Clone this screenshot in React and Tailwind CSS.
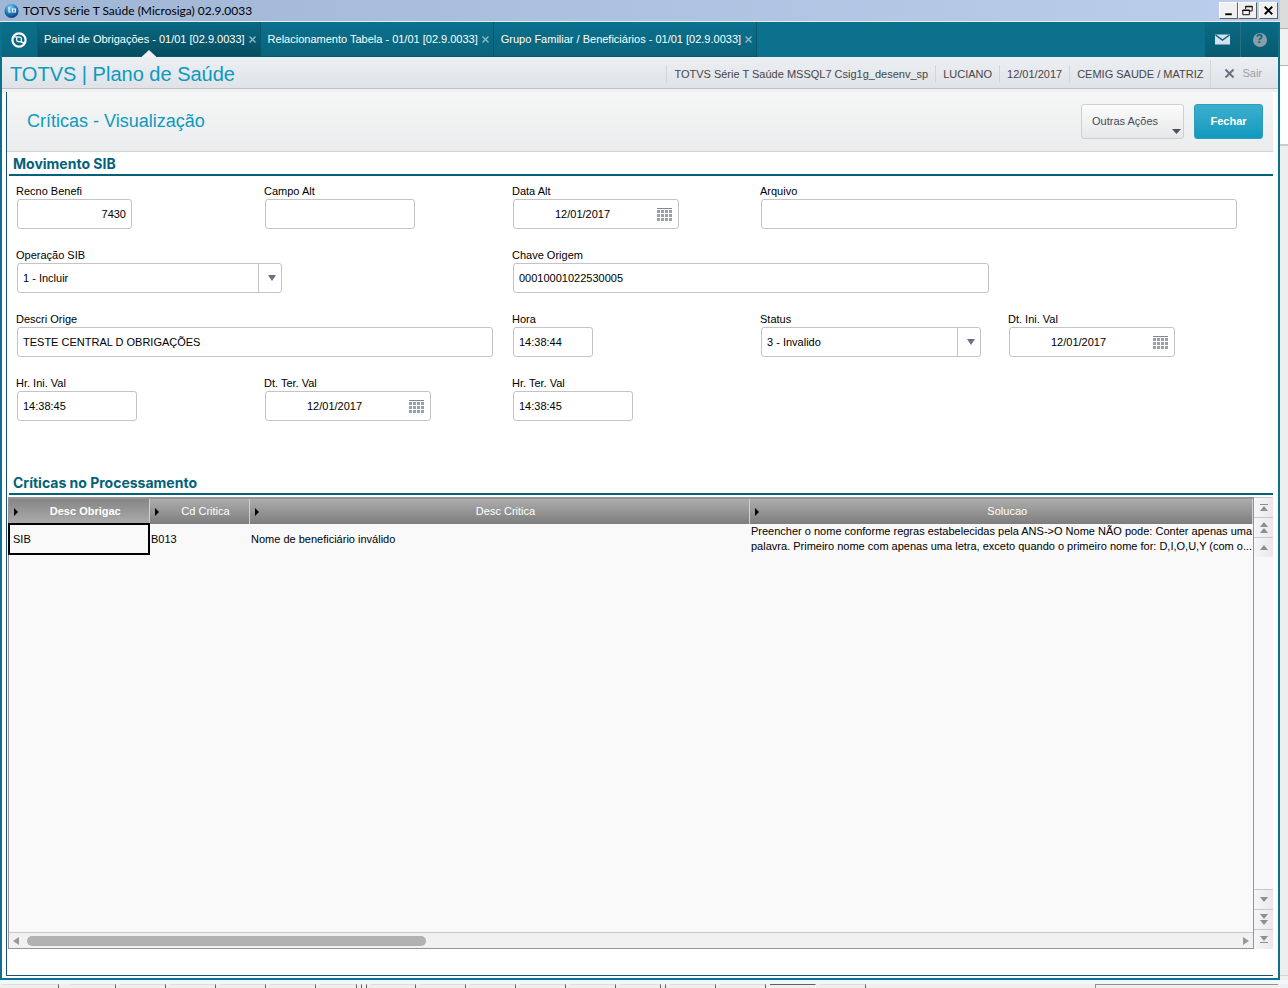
import { Fragment } from "react";

const tabs = [
  { title: "Painel de Obrigações - 01/01 [02.9.0033]", active: true },
  { title: "Relacionamento Tabela - 01/01 [02.9.0033]" },
  { title: "Grupo Familiar / Beneficiários - 01/01 [02.9.0033]" },
];

const sessionInfo = [
  "TOTVS Série T Saúde MSSQL7 Csig1g_desenv_sp",
  "LUCIANO",
  "12/01/2017",
  "CEMIG SAUDE / MATRIZ",
];

const fields = [
  { id: "recno", label: "Recno Benefi", value: "7430", width: "w-[115px]", align: "text-right" },
  { id: "campo", label: "Campo Alt", value: "", width: "w-[150px]" },
  { id: "dataAlt", label: "Data Alt", value: "12/01/2017", type: "date" },
  { id: "arquivo", label: "Arquivo", value: "", width: "w-[476px]", span: "col-span-2" },
  { id: "operacao", label: "Operação SIB", value: "1 - Incluir", type: "select", width: "w-[265px]", span: "col-span-2" },
  { id: "chave", label: "Chave Origem", value: "00010001022530005", width: "w-[476px]", span: "col-span-3" },
  { id: "descri", label: "Descri Orige", value: "TESTE CENTRAL D OBRIGAÇÕES", width: "w-[476px]", span: "col-span-2" },
  { id: "hora", label: "Hora", value: "14:38:44", width: "w-[80px]" },
  { id: "status", label: "Status", value: "3 - Invalido", type: "select", width: "w-[220px]" },
  { id: "dtIni", label: "Dt. Ini. Val", value: "12/01/2017", type: "date" },
  { id: "hrIni", label: "Hr. Ini. Val", value: "14:38:45", width: "w-[120px]" },
  { id: "dtTer", label: "Dt. Ter. Val", value: "12/01/2017", type: "date" },
  { id: "hrTer", label: "Hr. Ter. Val", value: "14:38:45", width: "w-[120px]" },
];

const columns = ["Desc Obrigac", "Cd Critica", "Desc Critica", "Solucao"];

const rows = [
  [
    "SIB",
    "B013",
    "Nome de beneficiário inválido",
    "Preencher o nome conforme regras estabelecidas pela ANS->O Nome NÃO pode: Conter apenas uma\npalavra. Primeiro nome com apenas uma letra, exceto quando o primeiro nome for: D,I,O,U,Y (com o...",
  ],
];

const toolbarWidths = [
  "w-[46px]", "w-[46px]", "w-[46px]", "w-[46px]", "w-[46px]", "w-[37px]", "w-px", "w-px", "w-[45px]",
  "w-[46px]", "w-[46px]", "w-[46px]", "w-[46px]", "w-[41px]", "w-px", "w-[46px]", "w-[46px]", "w-[46px]", "w-[46px]",
];

export default function App() {
  return (
    <div className="flex min-h-screen flex-col bg-[#f0f0f0] font-['Liberation_Sans',Arial,sans-serif] text-[11px] leading-[15px] text-black">
      <div className="flex flex-1">
        <div className="flex min-w-0 flex-1 flex-col">
          <TitleBar />
          <div className="flex flex-1 flex-col border-x-2 border-b-2 border-[#0b718d] bg-white">
            <TabBar />
            <SessionBar />
            <Content />
          </div>
        </div>
        <BackgroundEdge />
      </div>
      <BackgroundToolbar />
    </div>
  );
}

function TitleBar() {
  return (
    <header className="flex h-[22px] items-center border-b border-[#e4edf5] bg-linear-to-r from-[#9fb6d4] to-[#bbcfec] pr-0.5 pl-1">
      <svg className="h-4 w-4" viewBox="0 0 16 16">
        <defs>
          <radialGradient id="orb" cx="0.4" cy="0.25" r="0.8">
            <stop offset="0" stopColor="#8fd0f2" />
            <stop offset="0.5" stopColor="#1f7fc4" />
            <stop offset="1" stopColor="#123a6b" />
          </radialGradient>
        </defs>
        <circle cx="7.5" cy="8" r="7" fill="url(#orb)" />
        <path d="M5 4v5h2M8.500 6h3v3h-3z" fill="none" stroke="#e8f4fc" strokeWidth="1.2" />
      </svg>
      <h1 className="ml-[3px] flex-1 font-[Lato,'Noto_Sans',sans-serif] text-[12px]">
        TOTVS Série T Saúde (Microsiga) 02.9.0033
      </h1>
      <WindowButton label="Minimizar">
        <path d="M5 12h7" strokeWidth="2" />
      </WindowButton>
      <WindowButton label="Restaurar">
        <path d="M6.5 6.5v-3h7v5h-3M6 4h8M3.5 7.5h7v5h-7zM3 8h8" />
      </WindowButton>
      <div className="w-0.5" />
      <WindowButton label="Fechar janela">
        <path d="M4.5 4l8 8M12.5 4l-8 8" strokeWidth="2" />
      </WindowButton>
    </header>
  );
}

function WindowButton({ label, children }) {
  return (
    <button
      type="button"
      aria-label={label}
      className="h-[17px] w-[19px] border border-t-white border-r-[#606060] border-b-[#606060] border-l-white bg-[#f0f0f0]"
    >
      <svg className="h-[15px] w-[17px]" viewBox="0 0 17 16" fill="none" stroke="#000">
        {children}
      </svg>
    </button>
  );
}

function TabBar() {
  return (
    <nav className="flex h-[35px] bg-[#0b718d] text-white">
      <button
        type="button"
        aria-label="Início"
        className="flex w-9 items-center border-r border-[#0a6078] bg-linear-to-b from-[#0b6f8a] to-[#0a667f] pl-[9px]"
      >
        <svg className="h-4 w-4" viewBox="0 0 16 16" fill="none" stroke="#fff">
          <circle cx="8" cy="8" r="6.600" strokeWidth="2.200" />
          <path d="M2.500 4.800L9 5.200Q10.300 5.400 10.300 6.800V9.800L7 9.500Q5.700 9.300 5.700 8V5.500" strokeWidth="1.300" />
          <path d="M10 9.800L13.200 11.200" strokeWidth="1.600" />
        </svg>
      </button>
      {tabs.map((x) => (
        <Tab key={x.title} title={x.title} active={x.active} />
      ))}
      <div className="ml-auto flex">
        <button
          type="button"
          aria-label="Mensagens"
          className="flex w-9 items-center justify-center border-r border-[#2a6f80] bg-linear-to-b from-[#0b6b85] to-[#075a70]"
        >
          <svg className="h-[11px] w-[15px]" viewBox="0 0 15 11">
            <path d="M0 .5h15v10H0z" fill="#d5e2ec" />
            <path d="M.5 1l7 5 7-5" fill="none" stroke="#0b6580" strokeWidth="1.5" />
          </svg>
        </button>
        <button
          type="button"
          aria-label="Ajuda"
          className="flex w-[37px] items-center justify-center bg-linear-to-b from-[#0b6b85] to-[#075a70]"
        >
          <span className="flex h-3.5 w-3.5 items-center justify-center rounded-full bg-[#8b9fab] text-[12px] font-bold text-[#0a6078]">
            ?
          </span>
        </button>
      </div>
    </nav>
  );
}

function Tab({ title, active }) {
  return (
    <div
      className={`relative flex items-center gap-1 border-r border-b border-[#07566b] pr-1 bg-linear-to-b ${
        active ? "pl-1.5 from-[#0a6a84] to-[#064c5f]" : "pl-[7px] from-[#0b718d] to-[#09647c]"
      }`}
    >
      <a href="#" className="whitespace-nowrap">
        {title}
      </a>
      <button type="button" aria-label={`Fechar ${title}`}>
        <svg className="h-[7px] w-[7px]" viewBox="0 0 7 7" stroke="#8fbccb" strokeWidth="1.4">
          <path d="M.5.5l6 6M6.5.5l-6 6" />
        </svg>
      </button>
      {active && (
        <svg className="absolute -bottom-px left-1/2 h-[7px] w-[15px] -translate-x-1/2" viewBox="0 0 15 7">
          <path d="M0 7l7.500-7 7.500 7z" fill="#eef0f3" />
        </svg>
      )}
    </div>
  );
}

function SessionBar() {
  return (
    <div className="flex h-8 items-center border-b border-[#bcc3c8] bg-linear-to-b from-[#eceff2] to-[#dfe3e8] pt-0.5 pl-2">
      <h2 className="flex-1 text-[20px] leading-6 whitespace-nowrap text-[#0c9abe]">
        TOTVS | Plano de Saúde
      </h2>
      {sessionInfo.map((x) => (
        <span
          key={x}
          className="border-l border-[#d3d6d5] px-[7px] leading-[18px] whitespace-nowrap text-[#464646]"
        >
          {x}
        </span>
      ))}
      <button
        type="button"
        className="flex h-7 items-center gap-2 border-l border-[#d3d6d5] pr-4 pl-3.5 text-[#98a0a8]"
      >
        <svg className="h-[9px] w-[9px]" viewBox="0 0 9 9" stroke="#69717e" strokeWidth="2">
          <path d="M.5.5l8 8M8.500.5l-8 8" />
        </svg>
        Sair
      </button>
    </div>
  );
}

function Content() {
  return (
    <main className="flex flex-1 flex-col border-t-[3px] border-[#f0f0f2] pr-[5px] pb-0.5 pl-1">
      <div className="flex flex-1 flex-col border-b border-l border-[#1b4f80]">
        <div className="flex h-15 items-center gap-2.5 rounded-tr border-b border-[#d2d3d4] bg-linear-to-b from-[#f5f7f6] to-[#ebecee] pr-2.5 pl-5">
          <h2 className="flex-1 pb-0.5 text-[18px] leading-6 text-[#0c9abe]">Críticas - Visualização</h2>
          <button
            type="button"
            className="flex h-[35px] w-[103px] items-center rounded-[3px] border border-[#cdcfd1] bg-linear-to-b from-[#fcfcfc] to-[#e6e7e8] pr-0.5 pl-2.5 text-[#464a58]"
          >
            <span className="flex-1 text-left">Outras Ações</span>
            <svg className="mb-1 h-[5px] w-[9px] self-end" viewBox="0 0 9 5">
              <path d="M0 0h9L4.500 5z" fill="#4a5060" />
            </svg>
          </button>
          <button
            type="button"
            className="h-[35px] w-[69px] rounded-[3px] border border-[#2f9cb8] bg-linear-to-b from-[#3bafcf] to-[#0d99bd] font-bold text-white"
          >
            Fechar
          </button>
        </div>
        <SectionTitle>Movimento SIB</SectionTitle>
        <form className="mt-2 mb-[50px] grid grid-cols-[repeat(5,248px)] gap-y-[19px] pl-2.5">
          {fields.map((x) => (
            <Field key={x.id} field={x} />
          ))}
        </form>
        <SectionTitle>Críticas no Processamento</SectionTitle>
        <CriticasGrid />
      </div>
    </main>
  );
}

function SectionTitle({ children }) {
  return (
    <h3 className="ml-0.5 h-6 border-b-2 border-[#04617a] pl-1 font-[Inter,'Liberation_Sans',sans-serif] text-[14px] leading-6 font-bold text-[#04617a]">
      {children}
    </h3>
  );
}

const boxStyle = "h-[30px] rounded-[3px] border border-[#c4c4c4] bg-white px-[5px] outline-none";

function Field({ field }) {
  return (
    <div className={field.span}>
      <label htmlFor={field.id} className="-ml-px block w-fit">
        {field.label}
      </label>
      <FieldControl field={field} />
    </div>
  );
}

function FieldControl({ field }) {
  switch (field.type) {
    case "select":
      return (
        <div className={`relative ${field.width}`}>
          <select
            id={field.id}
            defaultValue={field.value}
            className={`${boxStyle} block w-full appearance-none`}
          >
            <option>{field.value}</option>
          </select>
          <div className="pointer-events-none absolute inset-y-px right-px flex w-[23px] items-center justify-center border-l border-[#c4c4c4] pl-1">
            <svg className="h-1.5 w-2" viewBox="0 0 8 6">
              <path d="M0 0h8L4 6z" fill="#697184" />
            </svg>
          </div>
        </div>
      );
    case "date":
      return (
        <div className="relative w-[166px]">
          <input
            id={field.id}
            defaultValue={field.value}
            className={`${boxStyle} block w-full pr-8 text-center`}
          />
          <button type="button" aria-label="Calendário" className="absolute top-[9px] right-[7px]">
            <CalendarIcon />
          </button>
        </div>
      );
    default:
      return (
        <input
          id={field.id}
          defaultValue={field.value}
          className={`${boxStyle} block ${field.width} ${field.align ?? ""}`}
        />
      );
  }
}

function CalendarIcon() {
  return (
    <svg className="h-[13px] w-[15px]" viewBox="0 0 15 13" fill="#98a0ac">
      <path d="M0 0h15v1H0z" fill="#7f8898" />
      {[2, 6, 10].map((y) => (
        <Fragment key={y}>
          {[0, 4, 8, 12].map((x) => (
            <rect key={x} x={x} y={y} width="3" height="3" />
          ))}
        </Fragment>
      ))}
    </svg>
  );
}

function CriticasGrid() {
  return (
    <div className="mt-0.5 mb-[26px] flex flex-1 pl-px">
      <div className="flex min-w-0 flex-1 flex-col border border-t-2 border-[#959595] bg-[#f9f9f9]">
        <table className="w-full table-fixed border-collapse">
          <colgroup>
            <col className="w-[140px]" />
            <col className="w-[100px]" />
            <col className="w-[500px]" />
            <col />
          </colgroup>
          <thead>
            <tr className="h-[25px]">
              {columns.map((x, i) => (
                <th
                  key={x}
                  className={`border-r border-[#d0d0d0] bg-linear-to-b pr-1 pl-[5px] text-white ${
                    i === 0
                      ? "from-[#858585] to-[#adadad] font-bold"
                      : "from-[#adadad] to-[#7d7d7d] font-normal"
                  }`}
                >
                  <span className="flex items-center">
                    <svg className="h-2 w-1" viewBox="0 0 4 8">
                      <path d="M0 0l4 4-4 4z" />
                    </svg>
                    <span className="flex-1 pl-2">{x}</span>
                  </span>
                </th>
              ))}
            </tr>
          </thead>
          <tbody>
            {rows.map((row) => (
              <tr key={row[1]} className="h-[30px]">
                {row.map((x, i) => (
                  <td
                    key={i}
                    className={`p-0 whitespace-pre ${
                      i === 0 ? "pl-1 outline-2 -outline-offset-1 outline-black" : "pl-0.5"
                    }`}
                  >
                    {x}
                  </td>
                ))}
              </tr>
            ))}
          </tbody>
        </table>
        <div className="mt-auto flex h-4 items-center gap-2 border-t border-[#c8c8c8] bg-[#f1f1f1] px-1">
          <svg className="h-2 w-1.5" viewBox="0 0 6 8">
            <path d="M6 0v8L0 4z" fill="#999" />
          </svg>
          <div className="flex-1">
            <div className="h-2.5 w-[33%] rounded-full bg-[#b1b1b1]" />
          </div>
          <svg className="h-2 w-1.5" viewBox="0 0 6 8">
            <path d="M0 0v8l6-4z" fill="#999" />
          </svg>
        </div>
      </div>
      <div className="flex w-[19px] flex-col bg-[#f8f8fa]">
        <ScrollButton label="Primeiro">
          <path d="M1 2h8v1H1zM5 4l4 5H1z" />
        </ScrollButton>
        <ScrollButton label="Página anterior">
          <path d="M5 0l4 5H1zM5 6l4 5H1z" />
        </ScrollButton>
        <ScrollButton label="Anterior">
          <path d="M5 3l4 5H1z" />
        </ScrollButton>
        <div className="flex-1" />
        <ScrollButton label="Próximo">
          <path d="M1 3h8L5 8z" />
        </ScrollButton>
        <ScrollButton label="Próxima página">
          <path d="M1 0h8L5 5zM1 6h8l-4 5z" />
        </ScrollButton>
        <ScrollButton label="Último">
          <path d="M1 2h8L5 7zM1 8h8v1H1z" />
        </ScrollButton>
      </div>
    </div>
  );
}

function ScrollButton({ label, children }) {
  return (
    <button
      type="button"
      aria-label={label}
      className="flex h-5 items-center justify-center border-t border-[#c8c8c8] bg-linear-to-r from-[#f6f6f8] to-[#e9e9ec]"
    >
      <svg className="h-[11px] w-2.5" viewBox="0 0 10 11" fill="#8e8e8e">
        {children}
      </svg>
    </button>
  );
}

// Sliver of the window that sits behind this one
function BackgroundEdge() {
  return (
    <div className="flex w-2 flex-col">
      <div className="h-7 bg-[#dcdcdc]" />
      <div className="h-[38px] border-y border-[#b4b4b4] bg-[#f0f0f0]" />
      <div className="h-20 border-b-2 border-[#cbcbcb] bg-white" />
      <div className="flex-1 border-b border-[#d4d4d4] bg-[#eeeeee]" />
      <div className="h-1 bg-[#f0f0f0]" />
    </div>
  );
}

function BackgroundToolbar() {
  return (
    <div className="flex h-2 gap-1 overflow-hidden border-t-4 border-[#f2f7fb] bg-[#efefef] pl-0.5">
      <div className="w-[57px] border-t border-r border-t-[#dcdcdc] border-r-[#606060]" />
      <div className="w-[3px]" />
      {toolbarWidths.map((width, i) => (
        <div
          key={i}
          className={`border-t border-r ${width} ${
            i === 17 ? "border-t-[#606060] border-r-white" : "border-t-[#dcdcdc] border-r-[#606060]"
          }`}
        />
      ))}
      <div className="ml-auto w-[183px] border-t border-l border-[#909090]" />
      <div className="w-1.5" />
    </div>
  );
}
